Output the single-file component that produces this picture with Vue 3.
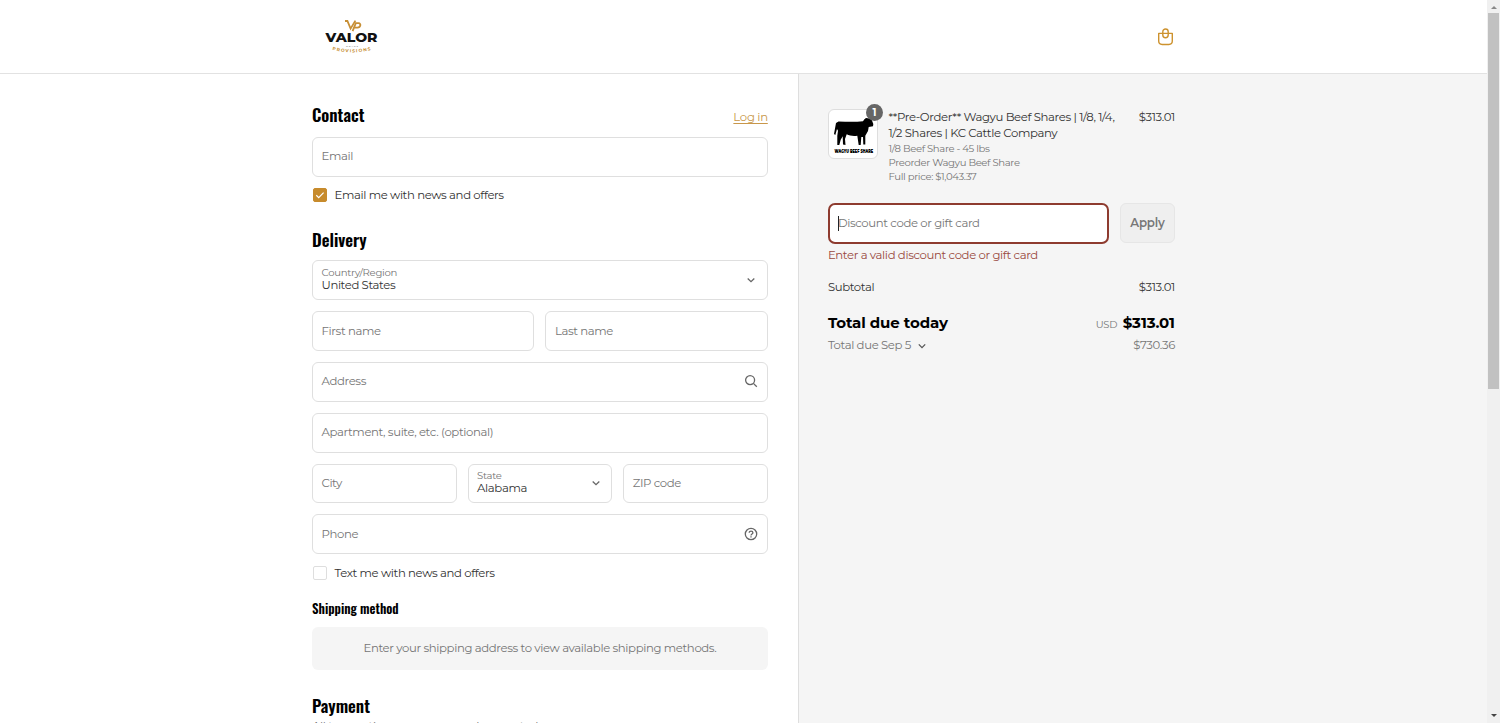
<template>
  <div class="page">
    <header class="header">
      <div class="header-inner">
        <svg class="logo" width="54" height="36" viewBox="0 0 54 36" aria-label="Valor Provisions">
          <g fill="none" stroke="#c78f35" stroke-width="1.8">
            <path d="M20 2h2.4l3.2 7.6L30.4 1.6" />
            <path d="M27.6 12.2l3.2-8h2.8c2.8 0 2.2 4.4-1.2 4.4h-2.6" />
          </g>
          <text class="logo-name" x="0.5" y="23.4" textLength="52" lengthAdjust="spacingAndGlyphs">VALOR</text>
          <text class="logo-small" x="21" y="28.2" textLength="12" lengthAdjust="spacing">GRASS</text>
          <path id="logo-arc" d="M7.2 30.8Q27 36 46.5 30.8" fill="none" />
          <text class="logo-sub"><textPath href="#logo-arc" textLength="39">PROVISIONS</textPath></text>
        </svg>
        <svg class="bag" width="17" height="18" viewBox="0 0 17 18" fill="none" stroke="#cd922e" stroke-width="1.4">
          <path d="M1.7 5.4h13.6v7.7a3.4 3.4 0 0 1-3.4 3.4H5.1a3.4 3.4 0 0 1-3.4-3.4z" stroke-linejoin="round" />
          <path d="M5.8 7V3.7a2.7 2.7 0 0 1 5.4 0V7a2.7 2.7 0 0 1-5.4 0z" />
        </svg>
      </div>
    </header>

    <div class="columns">
      <main class="main">
        <div class="form">
          <div class="title-row">
            <h2>Contact</h2>
            <a class="login">Log in</a>
          </div>
          <div class="field">Email</div>
          <div class="check">
            <span class="box checked">
              <svg width="10" height="10" viewBox="0 0 10 10" fill="none" stroke="#fff" stroke-width="1.2">
                <path d="M1.3 5.3l2.4 2.3 4.9-5" />
              </svg>
            </span>
            <span>Email me with news and offers</span>
          </div>

          <h2 class="delivery">Delivery</h2>
          <div class="rows">
            <div v-for="(row, i) in rows" :key="i" class="row">
              <div v-for="field in row" :key="field.label" class="field">
                <div v-if="field.value" class="select">
                  <small>{{ field.label }}</small>
                  <span>{{ field.value }}</span>
                </div>
                <span v-else>{{ field.label }}</span>
                <svg v-if="field.value" class="icon" width="14" height="14" viewBox="0 0 14 14">
                  <path d="M3.7 5.5L7 8.7l3.3-3.2" />
                </svg>
                <svg v-else-if="field.icon === 'search'" class="icon" width="14" height="14" viewBox="0 0 14 14">
                  <circle cx="6.1" cy="6.1" r="4.5" />
                  <path d="M9.4 9.4l3.4 3.4" />
                </svg>
                <svg v-else-if="field.icon === 'help'" class="icon" width="14" height="14" viewBox="0 0 14 14">
                  <circle cx="7" cy="7" r="5.7" />
                  <path d="M5.2 5.8c0-2.4 3.7-2.3 3.7 0C8.9 7 7 7 7 8.4M7 9.3v1.3" />
                </svg>
              </div>
            </div>
          </div>
          <div class="check">
            <span class="box"></span>
            <span>Text me with news and offers</span>
          </div>

          <h3>Shipping method</h3>
          <div class="notice">Enter your shipping address to view available shipping methods.</div>

          <h2 class="payment">Payment</h2>
          <p class="secure">All transactions are secure and encrypted.</p>
        </div>
      </main>

      <aside class="aside">
        <div class="summary">
          <div class="product">
            <div class="thumb">
              <svg width="48" height="48" viewBox="0 0 48 48">
                <path
                  d="M7 13L5 24l1.3 1L8 19l1 1.7-.7 5V35h2l1.4-5.3 2-3.4.3 8.2 2.5.5-.5-6 1.700-4.700c3 1.600 7 2 10.600 1.400l1.400 9.300h2l.6-8h1.700l.3 7.500h2v-8.800L39 21l.7-4 4.300-.8.3-2.200-1.300-3.500-1-2.800-1.500.8L37 8l-1.600 1.200L34 11.200c-8 .9-16 .5-24.500.3z"
                />
                <text x="5.5" y="42.5" textLength="38.5" lengthAdjust="spacingAndGlyphs">WAGYU BEEF SHARE</text>
              </svg>
              <span class="badge">1</span>
            </div>
            <div class="details">
              <div class="name">**Pre-Order** Wagyu Beef Shares | 1/8, 1/4,<br />1/2 Shares | KC Cattle Company</div>
              <div v-for="line in lines" :key="line" class="meta">{{ line }}</div>
            </div>
            <div class="price">$313.01</div>
          </div>

          <div class="discount">
            <div class="code"><i class="caret"></i>Discount code or gift card</div>
            <button type="button">Apply</button>
          </div>
          <div class="error">Enter a valid discount code or gift card</div>

          <div class="line subtotal">
            <span>Subtotal</span>
            <span class="price">$313.01</span>
          </div>
          <div class="line total">
            <strong>Total due today</strong>
            <span><small>USD</small><strong>$313.01</strong></span>
          </div>
          <div class="line later">
            <span>
              Total due Sep 5
              <svg width="10" height="10" viewBox="0 0 10 10"><path d="M1.8 3.4L5 6.6l3.2-3.2" /></svg>
            </span>
            <span class="price">$730.36</span>
          </div>
        </div>
      </aside>
    </div>

    <div class="scrollbar">
      <span class="arrow up"></span>
      <span class="track-thumb"></span>
      <span class="arrow down"></span>
    </div>
  </div>
</template>

<script setup>
const rows = [
  [{ label: 'Country/Region', value: 'United States' }],
  [{ label: 'First name' }, { label: 'Last name' }],
  [{ label: 'Address', icon: 'search' }],
  [{ label: 'Apartment, suite, etc. (optional)' }],
  [{ label: 'City' }, { label: 'State', value: 'Alabama' }, { label: 'ZIP code' }],
  [{ label: 'Phone', icon: 'help' }]
]

const lines = ['1/8 Beef Share - 45 lbs', 'Preorder Wagyu Beef Share', 'Full price: $1,043.37']
</script>

<style>
body {
  margin: 0;
  overflow: hidden;
}
</style>

<style scoped>
.page {
  position: relative;
  height: 723px;
  overflow: hidden;
  background: #fff;
  color: #333;
  font: 400 11.7px/16px Montserrat, Inter, sans-serif;
  letter-spacing: -0.38px;
  white-space: nowrap;
}

.header {
  box-sizing: border-box;
  height: 74px;
  padding: 0 325px;
  border-bottom: 1px solid #e2e2e2;
}

.header-inner {
  display: flex;
  justify-content: space-between;
  width: 849px;
  padding-top: 19px;
}

.logo {
  letter-spacing: 0;
}

.bag {
  margin-top: 9px;
}

.logo-name {
  font: 800 11.6px Montserrat, Inter, sans-serif;
  fill: #111;
}

.logo-small {
  font: 600 2.4px Montserrat, Inter, sans-serif;
  fill: #777;
}

.logo-sub {
  font: 700 4.4px Montserrat, Inter, sans-serif;
  fill: #c78f35;
}

.columns {
  display: flex;
  height: 649px;
}

.main {
  box-sizing: border-box;
  flex: 0 0 798px;
  padding: 29px 30px 0 312px;
  border-right: 1px solid #dedede;
}

.form {
  width: 455.8px;
}

h2,
h3 {
  margin: 0;
  color: #000;
  font: 600 16.9px/24px Oswald, Roboto, sans-serif;
  letter-spacing: 0;
}

.title-row {
  display: flex;
  justify-content: space-between;
  height: 34px;
}

.login {
  padding-top: 6px;
  color: #c8974a;
  letter-spacing: -0.3px;
  text-decoration: underline;
  text-underline-offset: 2px;
}

.field {
  box-sizing: border-box;
  display: flex;
  flex: 1;
  align-items: center;
  justify-content: space-between;
  height: 39.8px;
  padding: 0 8.5px 1px;
  border: 1px solid #dfdfdf;
  border-radius: 6px;
  color: #767676;
}

.select {
  display: flex;
  flex-direction: column;
  padding-bottom: 1px;
  color: #333;
}

.select span {
  line-height: 13px;
}

.select small {
  color: #767676;
  font-size: 10.1px;
  letter-spacing: -0.3px;
  line-height: 12px;
}

.icon {
  fill: none;
  stroke: #666;
  stroke-width: 1.3;
}

.check {
  display: flex;
  align-items: center;
  gap: 7.5px;
  margin: 10px 0 0 1px;
}

.rows + .check {
  margin-top: 10.8px;
}

.box {
  box-sizing: border-box;
  display: grid;
  place-items: center;
  width: 14px;
  height: 14px;
  border: 1px solid #dedede;
  border-radius: 2px;
}

.box.checked {
  border-color: #c78b2c;
  background: #c78b2c;
}

.delivery {
  margin: 25.2px 0 8.4px;
}

.rows {
  display: flex;
  flex-direction: column;
  gap: 11px;
}

.row {
  display: flex;
  gap: 11px;
}

h3 {
  margin-top: 16px;
  font-size: 12.9px;
}

.notice {
  height: 43px;
  margin-top: 6px;
  border-radius: 6px;
  background: #f5f5f5;
  color: #767676;
  line-height: 42px;
  text-align: center;
}

.payment {
  margin-top: 24px;
}

.secure {
  margin: 0;
  color: #767676;
}

.aside {
  flex: 1;
  background: #f5f5f5;
}

.summary {
  width: 347px;
  padding: 35px 0 0 29.1px;
}

.product {
  display: flex;
}

.thumb {
  position: relative;
  width: 48px;
  height: 48px;
  margin-top: 0.4px;
  border: 1px solid #dedede;
  border-radius: 6px;
  background: #fff;
}

.thumb text {
  font: 900 4.6px Montserrat, Inter, sans-serif;
  letter-spacing: 0;
}

.badge {
  position: absolute;
  top: -6.4px;
  right: -6px;
  width: 17px;
  height: 17px;
  border-radius: 50%;
  background: #666;
  color: #fff;
  font-size: 10px;
  font-weight: 700;
  line-height: 17px;
  text-align: center;
}

.details {
  flex: 1;
  margin-left: 10.6px;
}

.name {
  line-height: 16.4px;
}

.meta {
  color: #767676;
  font-size: 10.1px;
  letter-spacing: -0.36px;
  line-height: 14px;
}

.discount {
  display: flex;
  gap: 11px;
  margin-top: 19.2px;
}

.code {
  box-sizing: border-box;
  width: 281.2px;
  height: 41px;
  padding-left: 8px;
  border: 2px solid #8e3b2f;
  border-radius: 7px;
  background: #fff;
  color: #767676;
  line-height: 36px;
}

.caret {
  display: inline-block;
  width: 1px;
  height: 15px;
  margin-right: -1px;
  background: #222;
  vertical-align: middle;
}

button {
  box-sizing: border-box;
  width: 55px;
  height: 40px;
  padding: 0;
  border: 1px solid #e6e6e6;
  border-radius: 6px;
  background: #efefef;
  color: #777;
  font: 600 11.8px Montserrat, Inter, sans-serif;
  letter-spacing: -0.2px;
}

.error {
  margin-top: 3px;
  color: #994940;
}

.line {
  display: flex;
  justify-content: space-between;
}

.subtotal {
  margin-top: 16.4px;
}

.total {
  margin-top: 18px;
  color: #000;
  font-size: 15px;
  letter-spacing: -0.1px;
  line-height: 20px;
}

.total strong {
  font-weight: 700;
}

.total small {
  margin-right: 5.5px;
  color: #767676;
  font-size: 10px;
  letter-spacing: -0.3px;
}

.later {
  margin-top: 1.6px;
  color: #767676;
}

.later svg {
  margin-left: 3.5px;
  fill: none;
  stroke: #555;
  stroke-width: 1.3;
  vertical-align: -2px;
}

.scrollbar {
  position: absolute;
  top: 0;
  right: 0;
  display: flex;
  flex-direction: column;
  align-items: center;
  width: 13px;
  height: 723px;
  background: #f0f0f0;
}

.track-thumb {
  width: 11px;
  height: 376px;
  margin-top: 4px;
  background: #c1c1c1;
}

.arrow {
  border: 3px solid transparent;
}

.arrow.up {
  margin-top: 3px;
  border-bottom-color: #888;
}

.arrow.down {
  margin: auto 0 3px;
  border-top-color: #444;
}
</style>
